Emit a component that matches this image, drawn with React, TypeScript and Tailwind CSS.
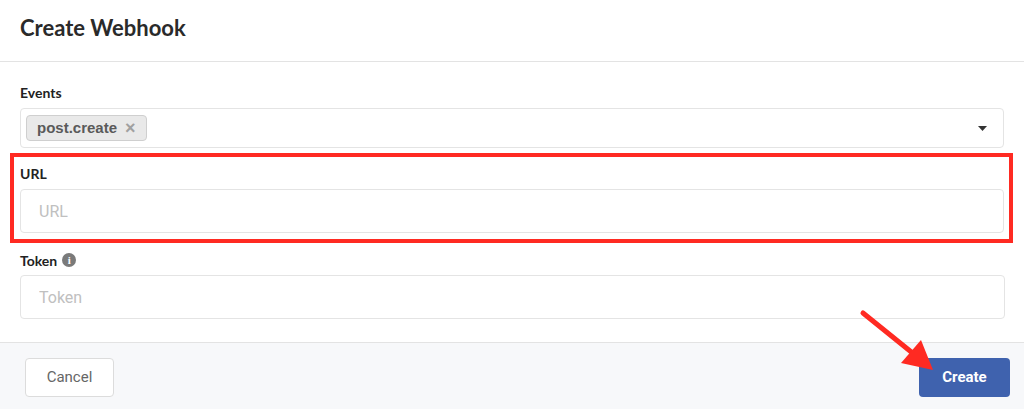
const lato = { fontFamily: 'Lato, "Open Sans", sans-serif' }

function Label({ children }: { children: React.ReactNode }) {
  return (
    <div className="flex items-center gap-[5px] h-4 text-[14px] font-bold text-[#222]" style={lato}>
      {children}
    </div>
  )
}

export default function App() {
  return (
    <div className="relative w-[1024px] h-[410px] bg-white overflow-hidden font-['Roboto',sans-serif]">
      {/* Header */}
      <div className="h-[62px] border-b border-[#e3e3e3] px-5 flex items-center">
        <h1 className="text-[22px] font-bold text-[#2a2a2a] -mt-[6px]" style={lato}>
          Create Webhook
        </h1>
      </div>

      {/* Body */}
      <div className="px-5 pt-[22px] pb-[23px]">
        <Label>Events</Label>
        <div className="mt-2 h-10 w-[984px] border border-[#e4e4e4] rounded flex items-center pl-[5px] pr-[16px]">
          <span className="h-[26px] px-[10px] flex items-center gap-[8px] bg-[#e9e9e9] border border-[#cfcfcf] rounded text-[15px] font-bold text-[#5a5a5a] font-['Liberation_Sans',Arial,sans-serif]">
            post.create
            <span className="text-[#a0a0a0] text-[18px] font-bold leading-none">×</span>
          </span>
          <svg className="ml-auto" width="9" height="5" viewBox="0 0 9 5">
            <path d="M0 0h9L4.5 5z" fill="#333" />
          </svg>
        </div>

        {/* Highlighted URL field */}
        <div className="mt-[5px] -mx-[10px] border-4 border-[#ff2a22] px-[6px] pt-[8px] pb-[6px] w-[1003px]">
          <Label>URL</Label>
          <input
            placeholder="URL"
            className="mt-2 h-11 w-[984px] border border-[#e4e4e4] rounded px-[18px] text-[16px] text-[#333] placeholder:text-[#c0c0c0] outline-none font-['Roboto',sans-serif]"
          />
        </div>

        <div className="mt-[9px]">
          <Label>
            Token
            <span className="w-[14px] h-[14px] rounded-full bg-[#7a7a7a] text-white text-[11px] font-bold flex items-center justify-center leading-none font-['Liberation_Serif',serif]">
              i
            </span>
          </Label>
          <input
            placeholder="Token"
            className="mt-[7px] h-11 w-[985px] border border-[#e4e4e4] rounded px-[18px] text-[16px] text-[#333] placeholder:text-[#c0c0c0] outline-none font-['Roboto',sans-serif]"
          />
        </div>
      </div>

      {/* Footer */}
      <div className="border-t border-[#e3e3e3] bg-[#f7f8fa] h-[67px] pl-[25px] pr-[14px] pt-[15px] flex items-start justify-between">
        <button className="h-[39px] w-[89px] bg-white border border-[#dcdcdc] rounded text-[15px] text-[#666]">
          Cancel
        </button>
        <button className="h-[39px] w-[91px] bg-[#3f62ae] rounded text-[15px] font-bold text-white">
          Create
        </button>
      </div>

      {/* Annotation arrow */}
      <svg className="absolute left-0 top-0 pointer-events-none" width="1024" height="410">
        <line x1="863" y1="313" x2="915" y2="355" stroke="#ff2a22" strokeWidth="5" strokeLinecap="round" />
        <polygon points="933,370 901,363 921,340" fill="#ff2a22" />
      </svg>
    </div>
  )
}
